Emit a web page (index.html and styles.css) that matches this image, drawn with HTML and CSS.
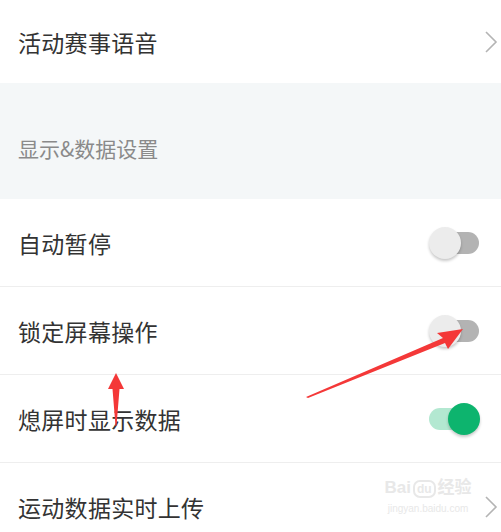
FILE: index.html
```html
<!DOCTYPE html>
<html lang="zh">
<head>
    <meta charset="UTF-8">
    <title>设置</title>
    <link rel="stylesheet" href="styles.css">
</head>
<body>
<div class="page">
    <div class="row row-first">
        <span class="label">活动赛事语音</span>
        <svg class="chevron" width="14" height="22" viewBox="0 0 14 22"><path d="M2 1 L12 11 L2 21" fill="none" stroke="#b4b4b4" stroke-width="1.6"/></svg>
    </div>
    <div class="section">显示&amp;数据设置</div>
    <div class="row">
        <span class="label">自动暂停</span>
        <span class="switch"><span class="knob"></span></span>
    </div>
    <div class="row">
        <span class="label">锁定屏幕操作</span>
        <span class="switch"><span class="knob"></span></span>
    </div>
    <div class="row">
        <span class="label">熄屏时显示数据</span>
        <span class="switch on"><span class="knob"></span></span>
    </div>
    <div class="row row-last">
        <span class="label">运动数据实时上传</span>
        <svg class="chevron" width="14" height="22" viewBox="0 0 14 22"><path d="M2 1 L12 11 L2 21" fill="none" stroke="#b4b4b4" stroke-width="1.6"/></svg>
    </div>

    <!-- 标注箭头 -->
    <svg class="marks" width="501" height="532" viewBox="0 0 501 532">
        <polygon fill="#f43838" points="306,397 443,338 437,333 463,329 448,349 445,343 308,398"/>
        <polygon fill="#f43838" points="116,373 124,389 119.5,389 116.5,426 115.5,426 112.5,389 108,389"/>
    </svg>
    <div class="wm">
        <div class="wm-top">Bai<span class="wm-du">du</span>经验</div>
        <div class="wm-url">jingyan.baidu.com</div>
    </div>
</div>
</body>
</html>
```

FILE: styles.css
```css
* {
    padding: 0;
    margin: 0;
    box-sizing: border-box;
}

body {
    background: #fff;
    font-family: "Noto Sans CJK SC", "Noto Sans", sans-serif;
    color: #333;
    overflow: hidden;
}

.page {
    position: relative;
    width: 501px;
    height: 532px;
    overflow: hidden;
}

.row {
    height: 88px;
    display: flex;
    align-items: center;
    justify-content: space-between;
    padding: 0 22px 0 18px;
    border-bottom: 1px solid #eeeeee;
}

.row-first {
    height: 83px;
    border-bottom: 0;
    padding-right: 3px;
}

.row-last {
    padding-right: 3px;
}

.label {
    font-size: 23px;
    line-height: 30px;
    letter-spacing: 0.3px;
}

.section {
    height: 116px;
    background: #f4f7f8;
    padding: 50px 0 0 18px;
    font-size: 21px;
    line-height: 30px;
    color: #8a8a8a;
}

.chevron {
    display: block;
    position: relative;
    z-index: 2;
}

.switch {
    position: relative;
    width: 50px;
    height: 22px;
}

.switch::before {
    content: "";
    position: absolute;
    left: 14px;
    top: 0;
    width: 36px;
    height: 22px;
    border-radius: 11px;
    background: #b3b3b3;
}

.knob {
    position: absolute;
    left: 0;
    top: -5px;
    width: 32px;
    height: 32px;
    border-radius: 50%;
    background: #ececec;
    box-shadow: 0 2px 3px rgba(0, 0, 0, 0.22);
}

.switch.on::before {
    left: 0;
    background: #b3e8d1;
}

.switch.on .knob {
    left: 19px;
    background: #0db46e;
}

.marks {
    position: absolute;
    left: 0;
    top: 0;
}

.wm {
    position: absolute;
    left: 384px;
    top: 476px;
    width: 88px;
    font-family: "Liberation Sans", "Noto Sans CJK SC", sans-serif;
    color: #e8e8e8;
    text-align: center;
}

.wm-top {
    font-size: 17px;
    font-weight: bold;
    line-height: 24px;
    white-space: nowrap;
}

.wm-du {
    font-size: 12px;
    border: 2px solid #e8e8e8;
    border-radius: 7px;
    padding: 0 2px;
    margin: 0 2px;
}

.wm-url {
    font-size: 10px;
    line-height: 16px;
    white-space: nowrap;
}
```
